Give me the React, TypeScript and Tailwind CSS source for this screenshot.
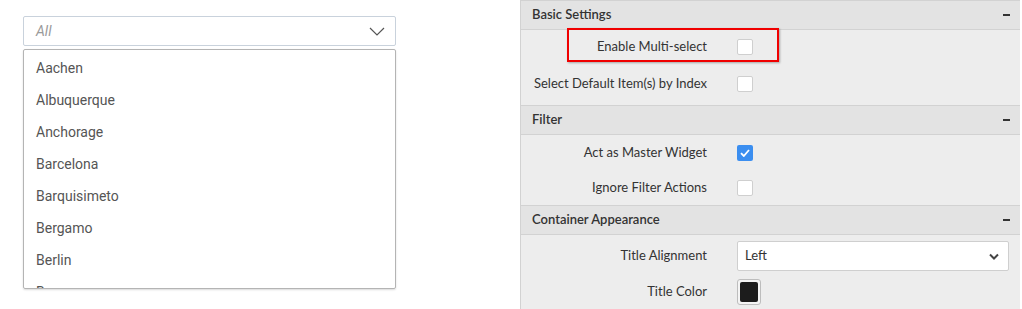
const cities = [
  'Aachen',
  'Albuquerque',
  'Anchorage',
  'Barcelona',
  'Barquisimeto',
  'Bergamo',
  'Berlin',
  'Bergen',
];

function Checkbox({ checked }: { checked?: boolean }) {
  if (checked) {
    return (
      <div className="w-4 h-4 rounded-[2px] bg-[#3b8ef0] flex items-center justify-center">
        <svg width="10" height="8" viewBox="0 0 10 8" fill="none">
          <path d="M1 4.2 L3.8 7 L9 1" stroke="white" strokeWidth="1.8" />
        </svg>
      </div>
    );
  }
  return <div className="w-4 h-4 rounded-[2px] bg-white border border-[#cfcfcf]" />;
}

function SectionHeader({ title }: { title: string }) {
  return (
    <div className="h-[29px] bg-[#e3e3e3] border-b border-[#d2d2d2] flex items-center justify-between pl-[11px] pr-[10px]">
      <span className="text-[13px] font-semibold text-[#333]">{title}</span>
      <span className="w-[7px] h-[2px] bg-[#333]" />
    </div>
  );
}

function Row({ label, height, children }: { label: string; height: string; children: React.ReactNode }) {
  return (
    <div className={`flex items-center ${height}`}>
      <div className="w-[186px] pl-[11px] flex justify-end whitespace-nowrap text-[13px] text-[#333]">{label}</div>
      <div className="ml-[30px] flex items-center">{children}</div>
    </div>
  );
}

export default function App() {
  return (
    <div className="w-[1022px] h-[309px] bg-white flex overflow-hidden" style={{ fontFamily: 'Lato, sans-serif' }}>
      {/* Left: combo box with open list */}
      <div className="w-[520px] pl-[23px] pt-[16px]" style={{ fontFamily: 'Roboto, sans-serif' }}>
        <div className="w-[373px] h-[30px] border border-[#c9d2dc] rounded-[2px] flex items-center justify-between pl-[12px] pr-[10px]">
          <span className="text-[14px] italic text-[#9a9a9a]">All</span>
          <svg width="16" height="9" viewBox="0 0 16 9" fill="none">
            <path d="M1 1 L8 8 L15 1" stroke="#555" strokeWidth="1.2" />
          </svg>
        </div>
        <div className="mt-[3px] pt-[2px] w-[373px] h-[240px] border border-[#b4b4b4] rounded-[2px] shadow-[0_1px_2px_rgba(0,0,0,0.15)] overflow-hidden">
          {cities.map((c) => (
            <div key={c} className="h-[32px] flex items-center pl-[12px] text-[14px] text-[#555]">
              {c}
            </div>
          ))}
        </div>
      </div>

      {/* Right: properties panel */}
      <div className="relative w-[500px] h-full border-l border-t border-[#d2d2d2] bg-[#ededed]">
        <SectionHeader title="Basic Settings" />
        <div className="h-[76px] border-b border-[#d2d2d2]">
          <Row label="Enable Multi-select" height="h-[33px]">
            <Checkbox />
          </Row>
          <Row label="Select Default Item(s) by Index" height="h-[42px]">
            <Checkbox />
          </Row>
        </div>

        <SectionHeader title="Filter" />
        <div className="h-[71px] border-b border-[#d2d2d2]">
          <Row label="Act as Master Widget" height="h-[35px]">
            <Checkbox checked />
          </Row>
          <Row label="Ignore Filter Actions" height="h-[35px]">
            <Checkbox />
          </Row>
        </div>

        <SectionHeader title="Container Appearance" />
        <div className="pt-[6px]">
          <Row label="Title Alignment" height="h-[30px]">
            <div className="w-[272px] h-[30px] bg-white border border-[#cfcfcf] rounded-[2px] flex items-center justify-between pl-[7px] pr-[9px]">
              <span className="text-[13px] text-[#333]">Left</span>
              <svg width="10" height="7" viewBox="0 0 10 7" fill="none">
                <path d="M1 1.5 L5 5.5 L9 1.5" stroke="#444" strokeWidth="2" />
              </svg>
            </div>
          </Row>
          <div className="mt-[5px]">
            <Row label="Title Color" height="h-[31px]">
              <div className="w-[24px] h-[26px] rounded-[3px] border border-[#bdbdbd] bg-[#f4f4f4] p-[2px]">
                <div className="w-full h-full rounded-[2px] bg-[#1c1c1c]" />
              </div>
            </Row>
          </div>
        </div>

        {/* annotation highlight */}
        <div className="absolute left-[46px] top-[27px] w-[212px] h-[34px] border-2 border-[#f00000] shadow-[1px_1px_2px_rgba(0,0,0,0.3)]" />
      </div>
    </div>
  );
}
